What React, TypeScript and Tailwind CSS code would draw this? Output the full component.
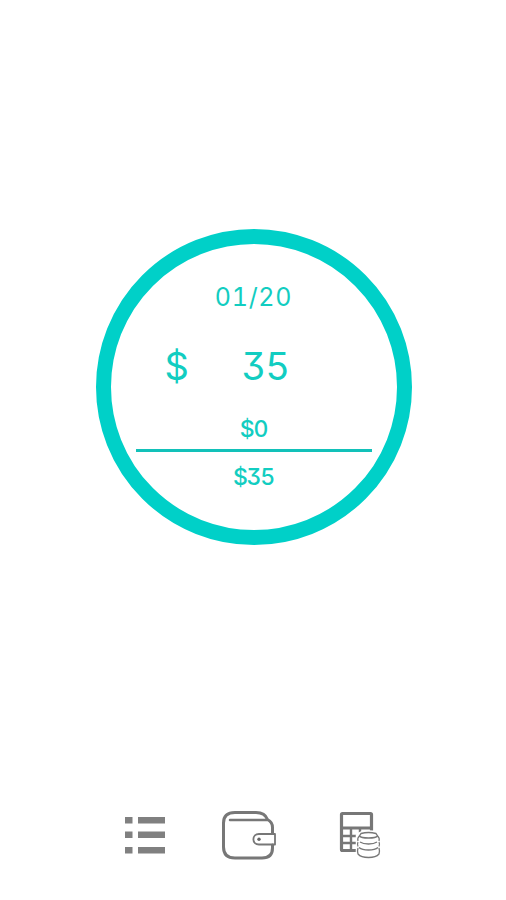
const budget = {
  date: '01/20',
  currency: '$',
  amount: '35',
  spent: '$0',
  remaining: '$35',
};

const ListIcon = () => (
  <svg width="42" height="40" viewBox="0 0 42 40" fill="#808080">
    {[2, 16.5, 32].map(y => (
      <g key={y}>
        <rect x="1" y={y} width="7.5" height="6.5" />
        <rect x="14" y={y} width="27" height="6.5" />
      </g>
    ))}
  </svg>
);

const WalletIcon = () => (
  <svg width="56" height="50" viewBox="0 0 56 50" fill="none" stroke="#777" strokeWidth="3" strokeLinecap="round">
    <path d="M51.5 23 V17.5 Q51.5 12 46.5 9.5 Q44 2.5 35 2.5 H14 Q2.5 2.5 2.5 13 V37 Q2.5 48 14 48 H41 Q51.5 48 51.5 38 V35" />
    <path d="M9 10 H46" strokeWidth="2.5" />
    <path d="M54 24 H38 C30.5 24 30.5 34.5 38 34.5 H54 Z" strokeWidth="1.8" strokeLinejoin="round" />
    <circle cx="38" cy="29.3" r="1.7" fill="#666" stroke="none" />
  </svg>
);

const CalculatorIcon = () => (
  <svg width="42" height="50" viewBox="0 0 42 50" fill="none" stroke="#777">
    <rect x="2.5" y="3.5" width="30" height="37" rx="1" strokeWidth="3.2" />
    <path d="M2.5 18 H32.5" strokeWidth="3" />
    <path d="M12 18 V40 M21 18 V24" strokeWidth="2.4" />
    <path d="M2.5 26 H20 M2.5 33 H20" strokeWidth="2.4" />
    {/* Coins */}
    <path d="M17.5 25 Q21 21 30 21 T41.5 25 V42 Q40 48.5 29.5 48.5 T17.5 42 Z" fill="#fff" stroke="#fff" strokeWidth="1.5" />
    <path d="M22 23.5 Q29.5 21.5 37 23.5 L38.5 26 Q37 28 29.5 28 T20.5 26 Z" strokeWidth="1.4" />
    <path d="M20.5 26 Q18 28 19 31 M38.5 26 Q41 28 40 31" strokeWidth="1.2" />
    <path d="M21 32 Q24 34 29.5 34 T38 32" strokeWidth="1.4" />
    <path d="M19 32 Q18 34 19 36.5 M40 32 Q41 34 40 36.5" strokeWidth="1.2" />
    <path d="M20 37.5 Q23 40 29.5 40 T39 37.5" strokeWidth="1.4" />
    <path d="M19 38 Q18 41 19 44 Q22 47.5 29.5 47.5 T40 44 Q41 41 40 38" strokeWidth="1.3" />
  </svg>
);

const App = () => {
  return (
    <div className="flex h-[900px] w-[506px] flex-col items-center justify-between bg-white pt-[229px] pb-10 font-[Inter,'Noto_Sans',sans-serif] text-[#12cdc1]">
      <main className="ml-px flex size-[316px] flex-col items-center rounded-full border-[15px] border-[#00d0c8] pt-[40px] [font-feature-settings:'cv09','tnum']">
        <p className="h-[26px] text-[25px] leading-[26px] tracking-[0.7px]">{budget.date}</p>

        <div className="mt-[36px] flex h-10 w-[236px] text-[38px] leading-10 tracking-[-1px]">
          <span className="w-[77px] pl-[29px]">{budget.currency}</span>
          <span className="pl-[29px]">{budget.amount}</span>
        </div>

        <p className="mt-[31px] h-6 text-[23px] leading-6 font-medium tracking-[-1.2px]">{budget.spent}</p>
        <div className="mt-[8px] h-[3px] w-[236px] shrink-0 bg-[#12c1b9]" />
        <p className="mt-[13px] h-6 text-[23px] leading-6 font-medium tracking-[-1.2px]">{budget.remaining}</p>
      </main>

      <nav className="flex w-full items-center pl-[124px]">
        <button aria-label="List">
          <ListIcon />
        </button>
        <button className="ml-[55px]" aria-label="Wallet">
          <WalletIcon />
        </button>
        <button className="ml-[62px]" aria-label="Calculator">
          <CalculatorIcon />
        </button>
      </nav>
    </div>
  );
};

export default App;
